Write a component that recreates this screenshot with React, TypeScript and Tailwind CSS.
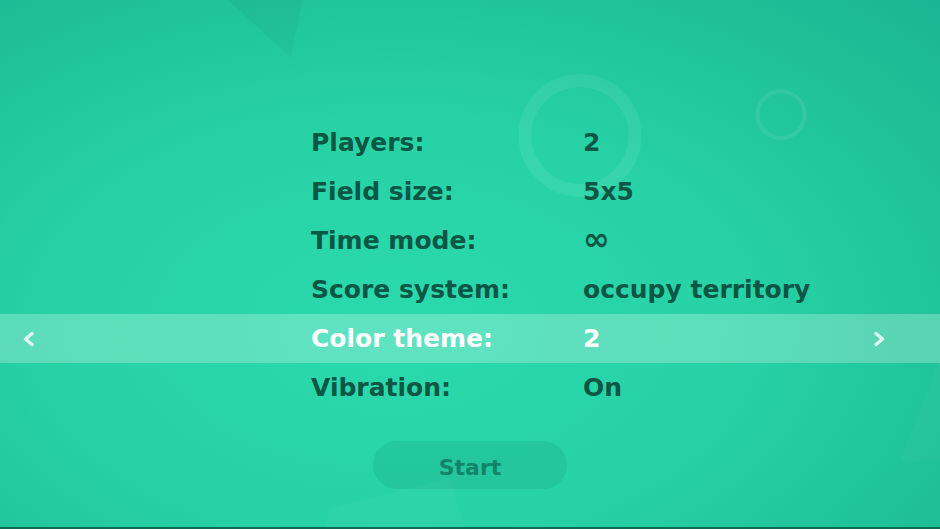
import React from 'react';

interface Setting {
    label: string;
    value: string;
}

const settings: Setting[] = [
    { label: 'Players:', value: '2' },
    { label: 'Field size:', value: '5x5' },
    { label: 'Time mode:', value: '∞' },
    { label: 'Score system:', value: 'occupy territory' },
    { label: 'Color theme:', value: '2' },
    { label: 'Vibration:', value: 'On' },
];

const Chevron: React.FC<{ dir: 'left' | 'right' }> = ({ dir }) => (
    <svg width="16" height="18" viewBox="0 0 16 18" className="opacity-80">
        <polyline
            points={dir === 'left' ? '11,3.5 4.5,9 11,14.5' : '5,3.5 11.5,9 5,14.5'}
            fill="none"
            stroke="#ffffff"
            strokeWidth="3.4"
            strokeLinecap="round"
            strokeLinejoin="round"
        />
    </svg>
);

const Backdrop: React.FC = () => (
    <svg className="absolute inset-0 w-full h-full pointer-events-none" viewBox="0 0 940 529" preserveAspectRatio="none">
        <polygon points="228,0 302,0 291,58" fill="#0a5a45" fillOpacity="0.06" />
        <circle cx="580" cy="136" r="55" fill="none" stroke="#ffffff" strokeOpacity="0.07" strokeWidth="13" />
        <circle cx="781" cy="115" r="23.5" fill="none" stroke="#ffffff" strokeOpacity="0.08" strokeWidth="4" />
        <polygon points="330,510 450,480 465,529 325,529" fill="#ffffff" fillOpacity="0.025" />
        <polygon points="900,463 940,360 940,463" fill="#ffffff" fillOpacity="0.025" />
    </svg>
);

const App: React.FC = () => {
    const activeIndex = 4;

    return (
        <div
            className="relative w-full h-[529px] overflow-hidden border-b-2 border-[#0f6a53] bg-[radial-gradient(ellipse_at_42%_62%,#2adaac_0%,#27d2a5_45%,#20c299_75%,#1ab592_100%)]"
            style={{ fontFamily: '"DejaVu Sans", sans-serif' }}
        >
            <Backdrop />
            <div className="relative pt-[118px]">
                {settings.map((s, i) => {
                    const active = i === activeIndex;
                    return (
                        <div
                            key={s.label}
                            className={`flex items-center h-[49px] text-[25px] font-bold ${active ? 'bg-white/25 text-white' : 'text-[#0b5645]'}`}
                        >
                            <div className="w-[311px] pl-[21px] flex items-center">
                                {active && <Chevron dir="left" />}
                            </div>
                            <div className="w-[272px] leading-none">{s.label}</div>
                            <div className={`flex-1 leading-none ${s.value === '∞' ? 'text-[32px] -mt-1' : ''}`}>{s.value}</div>
                            <div className="pr-[53px] flex items-center">
                                {active && <Chevron dir="right" />}
                            </div>
                        </div>
                    );
                })}
                <div className="flex justify-center mt-[29px]">
                    <button className="w-[194px] h-[48px] pt-1 rounded-full bg-[#0a5a45]/10 text-[22px] font-bold text-[#128569]">
                        Start
                    </button>
                </div>
            </div>
        </div>
    );
};

export default App;
